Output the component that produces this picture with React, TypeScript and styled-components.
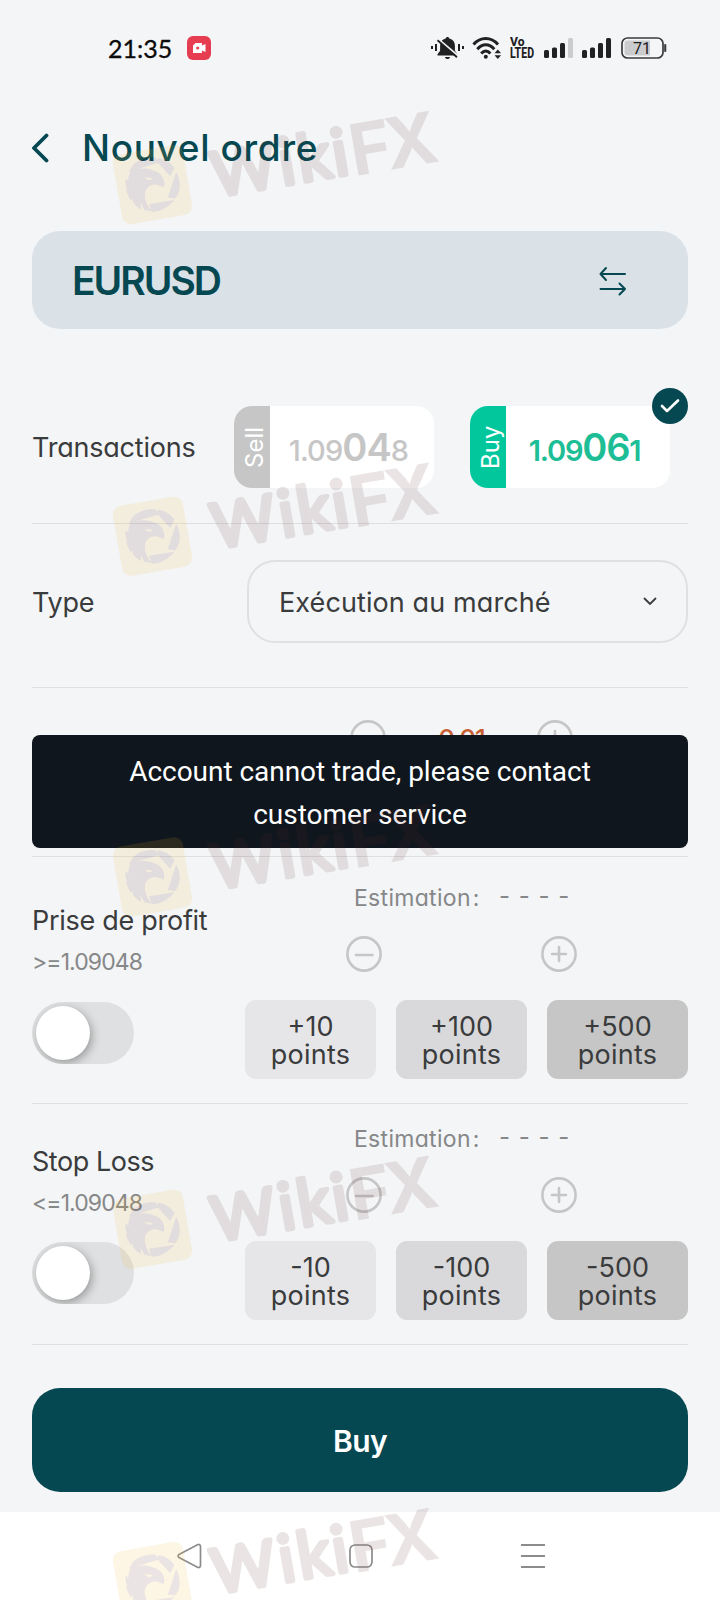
import React from "react";
import styled, { createGlobalStyle } from "styled-components";

const GlobalStyle = createGlobalStyle`
  * { box-sizing: border-box; }
  body { margin: 0; background: #f3f5f7; }
`;

const teal = "#054852";
const ink = "#3a3b3c";
const muted = "#868788";
const rule = "#dedfe1";

const Screen = styled.div`
  position: relative;
  width: 720px;
  height: 1600px;
  overflow: hidden;
  display: flex;
  flex-direction: column;
  background: #f3f5f7;
  color: ${ink};
  font-family: Inter, "Liberation Sans", sans-serif;
  font-feature-settings: "cv11";
  white-space: nowrap;
`;

const StatusBar = styled.div`
  height: 96px;
  padding: 0 53px 0 108px;
  display: flex;
  align-items: center;
  justify-content: space-between;
`;

const StatusLeft = styled.div`
  display: flex;
  align-items: center;
  gap: 14px;
`;

const StatusIcons = styled.div`
  display: flex;
  align-items: center;
  svg { display: block; }
`;

const Clock = styled.span`
  width: 65px;
  font: 400 25px Lato, sans-serif;
  letter-spacing: 0;
  color: #0b0b0b;
  -webkit-text-stroke: 0.3px #0b0b0b;
`;

const Header = styled.header`
  height: 104px;
  padding-left: 31px;
  display: flex;
  align-items: center;
  gap: 33px;
`;

const Title = styled.h1`
  margin: -1px 0 0;
  font-size: 37px;
  font-weight: 500;
  letter-spacing: 0.65px;
  color: ${teal};
`;

const Body = styled.main`
  padding: 0 32px;
  display: flex;
  flex-direction: column;
`;

const SymbolCard = styled.div`
  margin-top: 31px;
  height: 98px;
  padding: 1px 61px 0 40px;
  border-radius: 28px;
  background: #dae1e7;
  display: flex;
  align-items: center;
  justify-content: space-between;
  color: ${teal};
  font-size: 39px;
  font-weight: 600;
  letter-spacing: -2px;
`;

const TransactionsRow = styled.div`
  height: 195px;
  padding-top: 77px;
  border-bottom: 1px solid ${rule};
  display: flex;
  align-items: flex-start;
`;

const RowLabel = styled.div<{ $w: number; $h: number; $ls?: number }>`
  width: ${(p) => p.$w}px;
  padding-top: 1px;
  line-height: ${(p) => p.$h}px;
  font-size: 27px;
  letter-spacing: ${(p) => p.$ls ?? 0}px;
`;

const QuoteCard = styled.div<{ $fg: string; $ml?: number }>`
  position: relative;
  width: 200px;
  height: 82px;
  margin-left: ${(p) => p.$ml ?? 0}px;
  border-radius: 18px;
  background: #fff;
  display: flex;
  color: ${(p) => p.$fg};
`;

const QuoteTab = styled.div<{ $bg: string }>`
  width: 36px;
  padding-right: 5px;
  border-radius: 0 18px 18px 0;
  background: ${(p) => p.$bg};
  color: #fff;
  font-size: 24px;
  display: flex;
  align-items: center;
  justify-content: center;
  writing-mode: vertical-rl;
  transform: rotate(180deg);
`;

const Price = styled.div<{ $weight: number; $ls: number }>`
  flex: 1;
  display: flex;
  align-items: baseline;
  justify-content: center;
  padding-top: 17px;
  padding-right: 7px;
  line-height: 48px;
  font-size: 29px;
  font-weight: ${(p) => p.$weight};
  letter-spacing: ${(p) => p.$ls}px;
  b { font-size: 38px; font-weight: 600; }
`;

const Badge = styled.div`
  position: absolute;
  top: -18px;
  right: -18px;
  width: 36px;
  height: 36px;
  border-radius: 50%;
  background: ${teal};
  display: flex;
  align-items: center;
  justify-content: center;
`;

const TypeRow = styled.div`
  height: 164px;
  padding-top: 36px;
  border-bottom: 1px solid ${rule};
  display: flex;
`;

const Select = styled.div`
  flex: 1;
  height: 83px;
  padding: 1px 29px 0 30px;
  border: 2px solid #dfe0e2;
  border-radius: 28px;
  display: flex;
  align-items: center;
  justify-content: space-between;
  font-size: 27px;
  letter-spacing: 0.1px;
`;

const VolumeRow = styled.div`
  height: 169px;
  padding: 32px 115px 0 318px;
  border-bottom: 1px solid ${rule};
  display: flex;
  justify-content: space-between;
  color: #c85f35;
  font-size: 26px;
  font-weight: 500;
  line-height: 37px;
  letter-spacing: -1.1px;
`;

const LimitSection = styled.section<{ $top: number }>`
  padding: ${(p) => p.$top}px 0 24px;
  border-bottom: 1px solid ${rule};
  display: flex;
`;

const LimitInfo = styled.div`
  width: 213px;
  padding-top: 21px;
`;

const LimitTitle = styled.div<{ $ls: number }>`
  height: 32px;
  line-height: 32px;
  font-size: 27px;
  letter-spacing: ${(p) => p.$ls}px;
`;

const LimitBound = styled.div`
  margin-top: 11px;
  height: 28px;
  line-height: 28px;
  font-size: 23px;
  letter-spacing: -0.9px;
  color: ${muted};
`;

const Toggle = styled.div<{ $mt: number }>`
  margin-top: ${(p) => p.$mt}px;
  width: 102px;
  height: 62px;
  padding: 4px;
  border-radius: 31px;
  background: #dfe0e1;
  overflow: hidden;
`;

const Knob = styled.div`
  width: 54px;
  height: 54px;
  border-radius: 50%;
  background: #fff;
  box-shadow: 2px 3px 10px rgba(0, 0, 0, 0.32);
`;

const LimitControls = styled.div`
  flex: 1;
`;

const Estimate = styled.div`
  height: 28px;
  padding-left: 109px;
  line-height: 28px;
  display: flex;
  align-items: center;
  font-size: 23px;
  color: ${muted};
  letter-spacing: 0.3px;
`;

const EstimateLabel = styled.span`
  width: 145px;
  i { font-style: normal; padding-left: 2px; }
`;

const Dashes = styled.span`
  font-size: 24px;
  letter-spacing: 1px;
  font-feature-settings: "case";
`;

const Stepper = styled.div`
  margin-top: 24px;
  padding: 0 111px 0 101px;
  display: flex;
  justify-content: space-between;
  svg { display: block; }
`;

const Presets = styled.div`
  margin-top: 28px;
  display: grid;
  grid-template-columns: 131px 131px 141px;
  gap: 20px;
`;

const Preset = styled.button<{ $bg: string }>`
  height: 79px;
  padding: 2px 0 0;
  border: 0;
  border-radius: 11px;
  background: ${(p) => p.$bg};
  color: ${ink};
  font: 400 27px/28px Inter, sans-serif;
  font-feature-settings: "cv11", "case";
  span { display: block; }
  span + span { letter-spacing: 0.25px; }
`;

const SubmitButton = styled.button`
  margin: 43px 0 20px;
  height: 104px;
  padding: 2px 0 0;
  border: 0;
  border-radius: 28px;
  background: ${teal};
  color: #fff;
  font: 600 30px Inter, sans-serif;
  letter-spacing: -0.6px;
`;

const NavBar = styled.nav`
  height: 88px;
  padding: 0 174px 1px 177px;
  background: #fff;
  display: flex;
  justify-content: space-between;
  align-items: center;
  svg { display: block; }
`;

const Toast = styled.div`
  position: absolute;
  left: 32px;
  top: 735px;
  width: 656px;
  height: 113px;
  padding-top: 15px;
  border-radius: 8px;
  background: #0f161d;
  color: #fff;
  text-align: center;
  font: 400 28px/43px Roboto, sans-serif;
  letter-spacing: -0.04px;
`;

const WatermarkLayer = styled.svg`
  position: absolute;
  inset: 0;
  pointer-events: none;
`;

const CircleIcon = ({ plus }: { plus?: boolean }) => (
  <svg width="36" height="36" viewBox="0 0 36 36" fill="none" stroke="#c6c6c6" strokeWidth="2.6" strokeLinecap="round">
    <circle cx="18" cy="18" r="16.6" />
    {plus ? <path d="M11 18h14M18 11v14" /> : <path d="M10 19h16.5" />}
  </svg>
);

const Bars = ({ last }: { last: string }) => (
  <svg width="30" height="22" viewBox="0 0 30 22" fill="#1f2123">
    <rect x="0" y="13" width="5" height="8" rx="1.5" />
    <rect x="8" y="10.5" width="5" height="10.5" rx="1.5" />
    <rect x="16" y="6" width="5" height="15" rx="1.5" />
    <rect x="24" y="1" width="5" height="20" rx="1.5" fill={last} />
  </svg>
);

const MutedBell = () => (
  <svg width="33" height="24" viewBox="0 0 33 24" fill="#1f2123">
    <path d="M16.5 1c1 0 1.6.6 1.8 1.5 3.7.9 5.6 3.6 5.6 7.1v5.2l2.6 3.5v1.2H6.500v-1.200l2.600-3.500V9.600c0-3.500 1.900-6.200 5.600-7.100C14.900 1.600 15.500 1 16.500 1zM14 21h5c-.3 1.400-1.200 2-2.500 2s-2.200-.6-2.500-2z" />
    <path d="M6.500 2.500l21.500 18" stroke="#f3f5f7" strokeWidth="2" />
    <path d="M6.500 4.200l19.500 17" stroke="#1f2123" strokeWidth="1.800" />
    <rect x="0" y="10" width="2" height="3" /><rect x="4" y="8" width="2" height="7" />
    <rect x="27" y="8" width="2" height="7" /><rect x="31" y="10" width="2" height="3" />
  </svg>
);

const Wifi = () => (
  <svg width="31" height="24" viewBox="0 0 31 24" fill="none" stroke="#1f2123" strokeWidth="3">
    <path d="M1.500 8.500c7-8 17.500-8 24.500 0" />
    <path d="M5.300 13.200c5-5.800 12-5.800 17 0" />
    <path d="M9.200 17.500c3-3.300 6.200-3.300 9.200 0" />
    <circle cx="13.800" cy="20.800" r="2" fill="#1f2123" stroke="none" />
    <path d="M22.500 17.200l3.300-3.700 3.300 3.700zM22.500 19.200l3.300 3.700 3.300-3.700z" fill="#1f2123" stroke="none" />
  </svg>
);

const VoLte = () => (
  <svg width="25" height="26" viewBox="0 -1 25 26" fill="#1f2123" fontFamily="Roboto, sans-serif" fontWeight="800">
    <text x="0" y="9.500" fontSize="13" textLength="14.500" lengthAdjust="spacingAndGlyphs">Vo</text>
    <text x="0" y="21.500" fontSize="14.500" textLength="24" lengthAdjust="spacingAndGlyphs">LTED</text>
  </svg>
);

const Battery = () => (
  <svg width="46" height="22" viewBox="0 0 46 22">
    <rect x="1" y="1" width="41" height="20" rx="5.500" fill="none" stroke="#3a3b3d" strokeWidth="1.700" />
    <path d="M6.500 3.500H29v15H6.500a3 3 0 0 1-3-3v-9a3 3 0 0 1 3-3z" fill="#cbccce" />
    <path d="M43.500 7.500h1.500v7h-1.500z" fill="#3a3b3d" stroke="#3a3b3d" strokeWidth=".6" />
    <text x="21" y="16.800" fontSize="16" textAnchor="middle" fontFamily="Roboto, sans-serif" fill="#1f2123">71</text>
  </svg>
);

const Watermark = ({ y }: { y: number }) => (
  <g transform={`translate(152.500 ${y}) rotate(-9.800)`} opacity="0.12" fill="#642d2d">
    <rect x="-35.500" y="-35.500" width="71" height="71" rx="9" fill="#fabb32" />
    <g transform="rotate(9.800) scale(.3333)">
      <path d="M-58-60C-40-76-18-83 8-81L20-66-40-48-72-36Z" />
      <path d="M16-80C36-78 54-67 66-50L53-25 14-68Z" />
      <path d="M71-38C86-10 86 20 68 42L46 39Z" />
      <path d="M66 46C45 70 22 82-2 82L-10 58Z" />
      <path d="M-62-42C-42-50-14-50 2-42 20-38 34-26 36-2L32 10C28 4 20 2 10 0-6 0-18 8-22 22-26 40-18 62-2 80L-24 76-36 54-34 74C-44 70-52 62-58 54L-60 40-64 48C-72 38-78 24-80 10L-74 16C-82 2-82-10-80-18L-72-10C-74-22-70-34-62-42Z" />
      <path d="M-24-22L0-20C-2-14-10-12-16-15Z" fill="#fabb32" />
    </g>
    <g fontWeight="400" stroke="#642d2d" strokeWidth="4.600" strokeLinejoin="round" fontFamily="Lato, sans-serif" fontSize="65">
      <text y="23"><tspan x="60" fontSize="62">W</tspan><tspan x="128 147 182">iki</tspan></text>
    </g>
    <text x="200 236" y="26" fontWeight="700" fontFamily="Inter, sans-serif" fontSize="71">FX</text>
  </g>
);

interface LimitProps {
  title: string;
  bound: string;
  sign: string;
  top: number;
  toggleGap: number;
  titleSpacing: number;
}

const presets = [
  { points: 10, bg: "#e6e6e8" },
  { points: 100, bg: "#d9d9db" },
  { points: 500, bg: "#c6c6c6" },
];

const Limit = ({ title, bound, sign, top, toggleGap, titleSpacing }: LimitProps) => (
  <LimitSection $top={top}>
    <LimitInfo>
      <LimitTitle $ls={titleSpacing}>{title}</LimitTitle>
      <LimitBound>{bound}</LimitBound>
      <Toggle $mt={toggleGap}><Knob /></Toggle>
    </LimitInfo>
    <LimitControls>
      <Estimate>
        <EstimateLabel>Estimation<i>:</i></EstimateLabel>
        <Dashes>- - - -</Dashes>
      </Estimate>
      <Stepper><CircleIcon /><CircleIcon plus /></Stepper>
      <Presets>
        {presets.map((p) => (
          <Preset key={p.points} $bg={p.bg}>
            <span>{sign}{p.points}</span>
            <span>points</span>
          </Preset>
        ))}
      </Presets>
    </LimitControls>
  </LimitSection>
);

export default function App() {
  return (
    <>
      <GlobalStyle />
      <Screen>
        <StatusBar>
          <StatusLeft>
            <Clock>21:35</Clock>
            <svg width="24" height="24" viewBox="0 0 24 24">
              <rect width="24" height="24" rx="6" fill="#e63d51" />
              <path d="M6 9.500L8.500 7h6.500v2.500L18.500 8v8L15 14.500V17H6z" fill="#fff" />
              <circle cx="10.700" cy="12" r="1.600" fill="#e63d51" />
            </svg>
          </StatusLeft>
          <StatusIcons>
            <MutedBell />
            <svg width="8" height="1" />
            <Wifi />
            <svg width="7" height="1" />
            <VoLte />
            <svg width="9" height="1" />
            <Bars last="#cbcccd" />
            <svg width="8" height="1" />
            <Bars last="#1f2123" />
            <svg width="9" height="1" />
            <Battery />
          </StatusIcons>
        </StatusBar>

        <Header>
          <svg width="18" height="30" viewBox="0 0 18 30" fill="none" stroke={teal} strokeWidth="3.800" strokeLinecap="round" strokeLinejoin="round">
            <path d="M15.500 2.500L3 15l12.500 12.500" />
          </svg>
          <Title>Nouvel ordre</Title>
        </Header>

        <Body>
          <SymbolCard>
            EURUSD
            <svg width="28" height="30" viewBox="0 0 28 30" fill="none" stroke={teal} strokeWidth="2" strokeLinecap="round" strokeLinejoin="round">
              <path d="M26 8H1.500M7 2L1.500 8 7 14M1.500 23H26M20.500 17.500L26 23l-5.500 5.500" />
            </svg>
          </SymbolCard>

          <TransactionsRow>
            <RowLabel $w={202} $h={82} $ls={-0.22}>Transactions</RowLabel>
            <QuoteCard $fg="#c6c6c6">
              <QuoteTab $bg="#c6c6c6">Sell</QuoteTab>
              <Price $weight={500} $ls={-0.9}>1.09<b>04</b>8</Price>
            </QuoteCard>
            <QuoteCard $fg="#1dbe96" $ml={36}>
              <QuoteTab $bg="#02c79c">Buy</QuoteTab>
              <Price $weight={600} $ls={-1.2}>1.09<b>06</b>1</Price>
              <Badge>
                <svg width="20" height="16" viewBox="0 0 20 16" fill="none" stroke="#fff" strokeWidth="2.600" strokeLinecap="round" strokeLinejoin="round">
                  <path d="M2 8l5 5L18 2.500" />
                </svg>
              </Badge>
            </QuoteCard>
          </TransactionsRow>

          <TypeRow>
            <RowLabel $w={215} $h={83} $ls={-0.2}>Type</RowLabel>
            <Select>
              Exécution au marché
              <svg width="14" height="10" viewBox="0 0 14 10" fill="none" stroke={ink} strokeWidth="1.800" strokeLinecap="round">
                <path d="M1.500 1.500L7 7l5.500-5.500" />
              </svg>
            </Select>
          </TypeRow>

          <VolumeRow>
            <CircleIcon />
            <span>0.01</span>
            <CircleIcon plus />
          </VolumeRow>

          <Limit title="Prise de profit" bound=">=1.09048" sign="+" top={27} toggleGap={26} titleSpacing={-0.28} />
          <Limit title="Stop Loss" bound="<=1.09048" sign="-" top={21} toggleGap={25} titleSpacing={-0.45} />

          <SubmitButton>Buy</SubmitButton>
        </Body>

        <NavBar>
          <svg width="25" height="26" viewBox="0 0 25 26" fill="none" stroke="#8c8c8c" strokeWidth="1.700" strokeLinejoin="round">
            <path d="M2 11.600L20.500 1.800c1.700-.9 3 .2 3 1.600v19.200c0 1.400-1.300 2.500-3 1.600L2 14.400c-1.200-.7-1.200-2.100 0-2.800z" />
          </svg>
          <svg width="24" height="24" viewBox="0 0 24 24" fill="none" stroke="#8c8c8c" strokeWidth="1.700">
            <rect x="1" y="1" width="22" height="22" rx="5" />
          </svg>
          <svg width="26" height="26" viewBox="0 0 26 26" stroke="#8c8c8c" strokeWidth="2">
            <path d="M1 2h24M1 13h24M1 24h24" />
          </svg>
        </NavBar>

        <Toast>
          Account cannot trade, please contact
          <br />
          customer service
        </Toast>

        <WatermarkLayer width="720" height="1600" viewBox="0 0 720 1600">
          {[184.600, 536.300, 877, 1229.300, 1581.600].map((y) => (
            <Watermark key={y} y={y} />
          ))}
        </WatermarkLayer>
      </Screen>
    </>
  );
}
